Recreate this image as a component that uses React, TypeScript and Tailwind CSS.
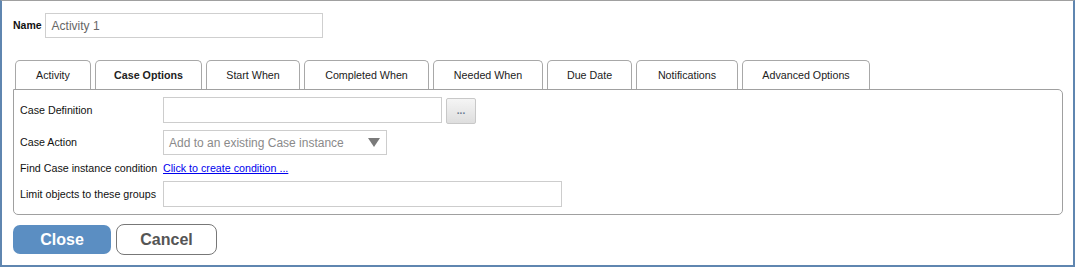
import React from 'react';

const tabs = [
  { label: 'Activity', w: 'w-[76px]' },
  { label: 'Case Options', w: 'w-[107px]', active: true },
  { label: 'Start When', w: 'w-[94px]' },
  { label: 'Completed When', w: 'w-[125px]' },
  { label: 'Needed When', w: 'w-[110px]' },
  { label: 'Due Date', w: 'w-[85px]' },
  { label: 'Notifications', w: 'w-[102px]' },
  { label: 'Advanced Options', w: 'w-[128px]' },
];

const Label: React.FC<{ children: React.ReactNode }> = ({ children }) => (
  <div className="w-[143px] shrink-0 text-[10.7px] text-[#111]">{children}</div>
);

export default function App() {
  return (
    <div
      className="h-[267px] w-[1075px] border-t border-l-2 border-r-2 border-b-2 border-[#5f86b0] border-t-[#a0a0a0] bg-white pl-[11px] pt-[12px]"
      style={{ fontFamily: '"Liberation Sans", Arial, sans-serif' }}
    >
      {/* Name */}
      <div className="flex items-center gap-[3px]">
        <span className="text-[10.5px] font-bold text-[#111]">Name</span>
        <div className="flex h-[25px] w-[278px] items-center border border-[#cfcfcf] px-[6px] text-[12px] text-[#666]">
          Activity 1
        </div>
      </div>

      {/* Tabs */}
      <div className="mt-[22px] ml-[2px] flex gap-[4px]">
        {tabs.map(t => (
          <div
            key={t.label}
            className={`${t.w} flex h-[29px] items-center justify-center rounded-t-[5px] border border-b-0 border-[#a8a8a8] text-[10.7px] text-[#222] ${t.active ? 'font-bold' : ''}`}
          >
            {t.label}
          </div>
        ))}
      </div>

      {/* Panel */}
      <div className="h-[126px] w-[1050px] rounded-tr-[5px] rounded-b-[5px] border border-[#a0a0a0] pl-[6px] pt-[7px]">
        <div className="flex h-[26px] items-center">
          <Label>Case Definition</Label>
          <div className="h-[26px] w-[279px] border border-[#cdcdcd]" />
          <div className="ml-[4px] mt-[2px] flex h-[26px] w-[30px] items-center justify-center rounded-[2px] border border-[#c8c8c8] bg-gradient-to-b from-[#f5f5f5] to-[#dedede] pb-[2px] text-[10px] font-bold text-[#6a7a90]">
            ...
          </div>
        </div>
        <div className="mt-[7px] flex h-[25px] items-center">
          <Label>Case Action</Label>
          <div className="flex h-[25px] w-[224px] items-center justify-between border border-[#cdcdcd] pl-[5px] pr-[6px] text-[12px] text-[#8a8a8a]">
            <span>Add to an existing Case instance</span>
            <svg width="12" height="9" viewBox="0 0 12 9">
              <path d="M0 0 L12 0 L6 9 Z" fill="#7a7a7a" />
            </svg>
          </div>
        </div>
        <div className="flex h-[26px] items-center">
          <Label>Find Case instance condition</Label>
          <a className="text-[10.7px] text-[#0000ee] underline">Click to create condition ...</a>
        </div>
        <div className="flex h-[26px] items-center">
          <Label>Limit objects to these groups</Label>
          <div className="h-[26px] w-[399px] border border-[#cdcdcd]" />
        </div>
      </div>

      {/* Buttons */}
      <div className="mt-[9px] flex items-center gap-[5px]">
        <button className="h-[29px] w-[98px] rounded-[7px] bg-[#5b8ec2] text-[16px] font-bold text-white">
          Close
        </button>
        <button className="h-[31px] w-[101px] rounded-[8px] border border-[#777] bg-white text-[16px] font-bold text-[#555]">
          Cancel
        </button>
      </div>
    </div>
  );
}
